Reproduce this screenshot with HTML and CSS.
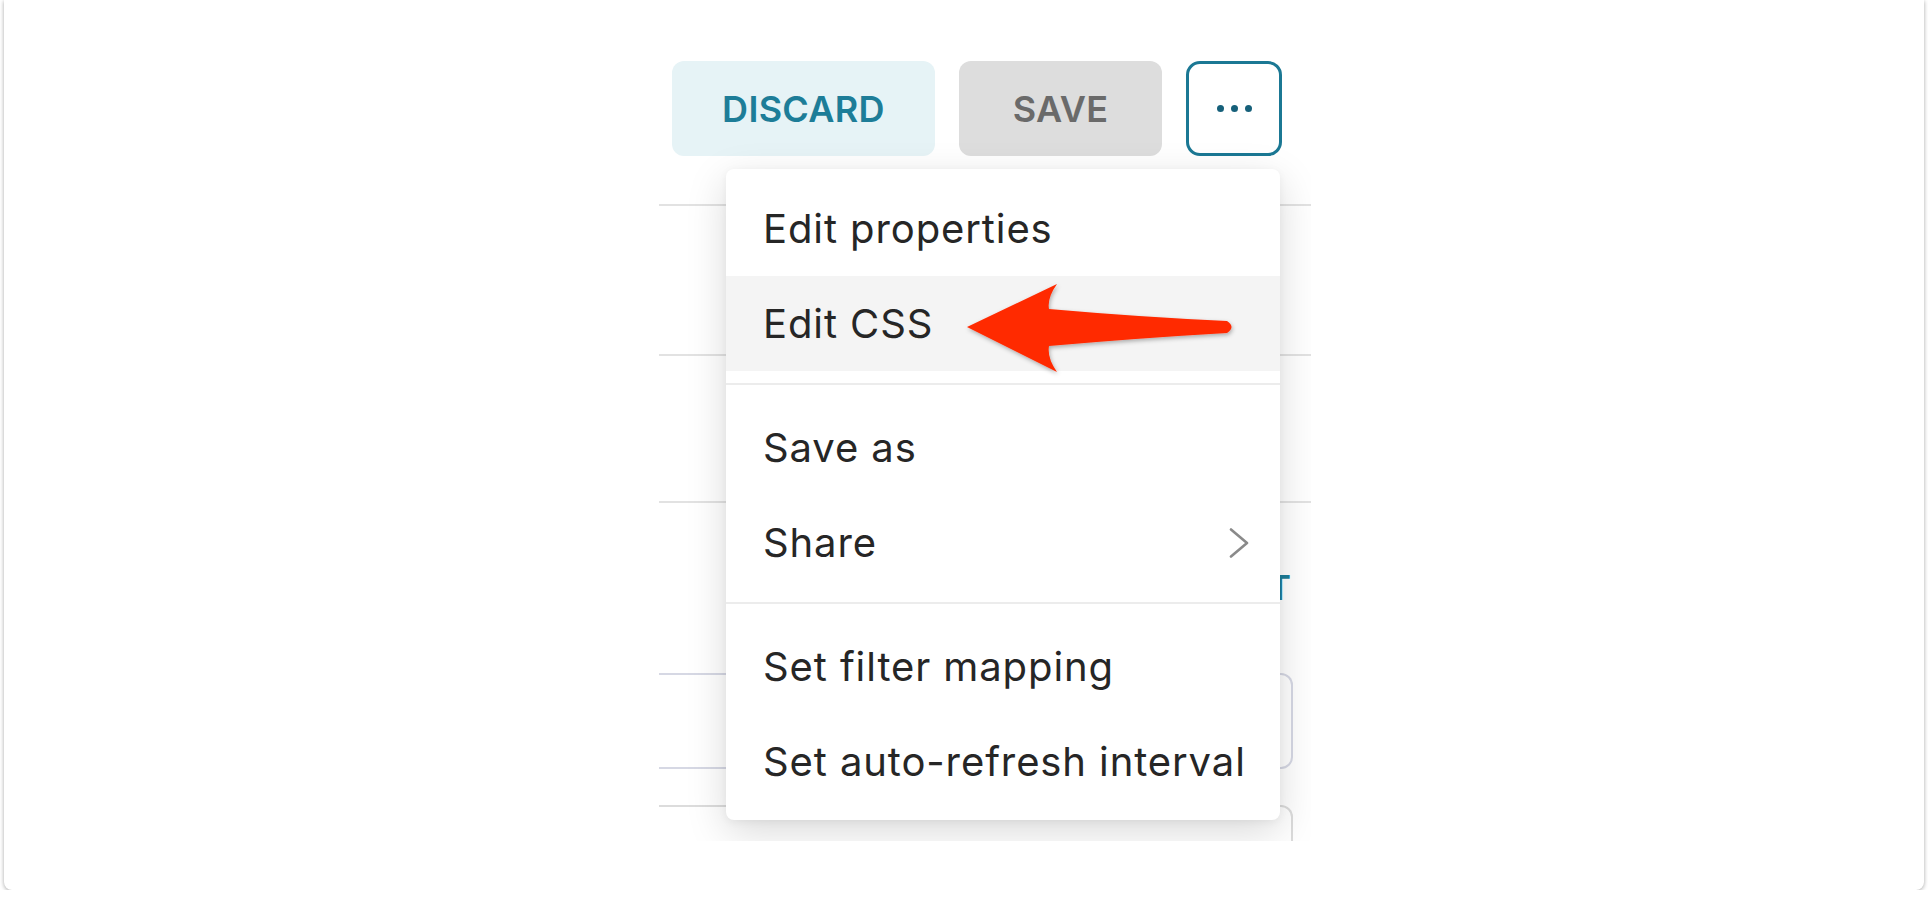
FILE: index.html
```html
<!DOCTYPE html>
<html lang="en">
<head>
<meta charset="utf-8">
<title>Dashboard menu</title>
<link rel="stylesheet" href="styles.css">
</head>
<body>
<div class="frame">
  <div class="panel">
    <div class="toolbar">
      <button class="btn btn-discard">DISCARD</button>
      <button class="btn btn-save">SAVE</button>
      <button class="btn btn-more"><span class="dot"></span><span class="dot"></span><span class="dot"></span></button>
    </div>
    <div class="row row-a"></div>
    <div class="row row-b"></div>
    <div class="row row-c"></div>
    <div class="row row-d"><span class="edit-label">EDIT</span></div>
    <div class="field field-1"></div>
    <div class="field field-2"></div>

    <div class="menu">
      <div class="item">Edit properties</div>
      <div class="item active">Edit CSS</div>
      <div class="divider"></div>
      <div class="item">Save as</div>
      <div class="item">Share
        <svg class="chev" width="20" height="30" viewBox="0 0 20 30"><polyline points="2,1.5 18,15 2,28.5" fill="none" stroke="#8a8a8a" stroke-width="2.6" stroke-linecap="round" stroke-linejoin="round"/></svg>
      </div>
      <div class="divider"></div>
      <div class="item">Set filter mapping</div>
      <div class="item">Set auto-refresh interval</div>
    </div>
  </div>
</div>

<svg class="annotation" width="1928" height="899" viewBox="0 0 1928 899">
  <defs>
    <filter id="ds" x="-10%" y="-30%" width="130%" height="160%">
      <feDropShadow dx="1" dy="2" stdDeviation="2" flood-color="#000" flood-opacity="0.3"/>
    </filter>
  </defs>
  <path d="M967,327 L1057,284 Q1047,298 1049,309 Q1140,317 1227,321 Q1236,327 1227,333 Q1140,338 1049,346 Q1047,358 1057,372 Z" fill="#ff2a00" filter="url(#ds)"/>
</svg>
</body>
</html>
```

FILE: styles.css
```css
body {
  margin: 0;
  background: #ffffff;
  font-family: Inter, "Noto Sans", sans-serif;
}

.frame {
  width: 1920px;
  height: 890px;
  margin-left: 4px;
  background: #ffffff;
  border-radius: 0 0 8px 8px;
  box-shadow: 0 1px 4px rgba(0, 0, 0, 0.35);
  display: flex;
  padding: 40px 0 0 655px;
  box-sizing: border-box;
}

.panel {
  position: relative;
  width: 652px;
  height: 801px;
  overflow: hidden;
  background: #ffffff;
}

.toolbar {
  display: flex;
  gap: 24px;
  padding: 21px 0 0 13px;
}

.btn {
  height: 95px;
  border: none;
  border-radius: 12px;
  padding: 0;
  font-family: Inter, "Noto Sans", sans-serif;
  font-size: 36px;
  font-weight: 600;
  letter-spacing: 0.3px;
  display: flex;
  align-items: center;
  justify-content: center;
  box-sizing: border-box;
}

.btn-discard {
  width: 263px;
  background: #e6f3f6;
  color: #1d7d98;
}

.btn-save {
  width: 203px;
  background: #dddddd;
  color: #6a6a6a;
}

.btn-more {
  width: 96px;
  background: #ffffff;
  border: 3px solid #1b7894;
  border-radius: 14px;
  gap: 7px;
}

.dot {
  width: 7px;
  height: 7px;
  border-radius: 50%;
  background: #16607a;
}

.row {
  border-bottom: 2px solid #e2e2e2;
}

.row-a { height: 48px; }
.row-b { height: 148px; }
.row-c { height: 145px; }

.row-d {
  height: 170px;
  border-bottom: none;
  display: flex;
  justify-content: flex-end;
  align-items: flex-end;
  padding: 0 20px 68px 0;
  box-sizing: border-box;
}

.edit-label {
  color: #1d7d98;
  font-size: 34px;
  line-height: 34px;
  font-weight: 600;
}

.field {
  width: 634px;
  box-sizing: border-box;
  border: 2px solid #d6d8e4;
  border-left: none;
  border-radius: 0 12px 12px 0;
}

.field-1 { height: 96px; }

.field-2 {
  height: 100px;
  margin-top: 36px;
  border-color: #dcdcdc;
}

.menu {
  position: absolute;
  left: 67px;
  top: 129px;
  width: 554px;
  box-sizing: border-box;
  padding: 12px 0 11px;
  background: #ffffff;
  border-radius: 8px;
  box-shadow: 0 12px 40px rgba(0, 0, 0, 0.15), 0 2px 8px rgba(0, 0, 0, 0.05);
  z-index: 2;
}

.item {
  height: 95px;
  line-height: 95px;
  padding: 0 31px 0 37px;
  font-size: 40px;
  letter-spacing: 0.9px;
  color: #262626;
  display: flex;
  justify-content: space-between;
  align-items: center;
  white-space: nowrap;
}

.item.active {
  background: #f4f4f4;
}

.chev {
  display: block;
}

.divider {
  height: 2px;
  background: #ececec;
  margin: 12px 0 15px;
}

.annotation {
  position: absolute;
  left: 0;
  top: 0;
  pointer-events: none;
  z-index: 10;
}
```
